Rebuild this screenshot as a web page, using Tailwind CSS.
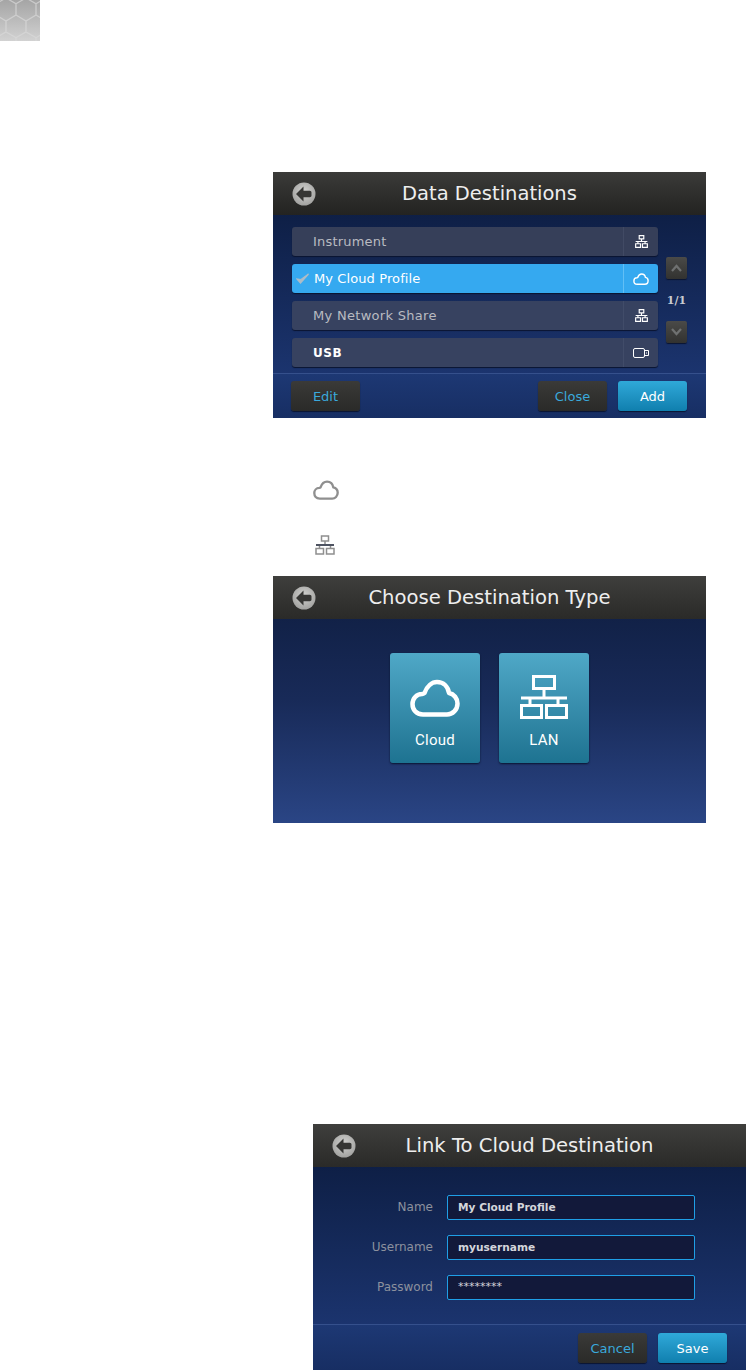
<!DOCTYPE html>
<html lang="en">
<head>
<meta charset="UTF-8">
<title>Data Destinations</title>
<script src="https://cdn.jsdelivr.net/npm/@tailwindcss/browser@4"></script>
</head>
<body class="bg-white font-['DejaVu_Sans',sans-serif]">
<svg width="0" height="0" class="absolute">
  <defs>
    <radialGradient id="backfill" cx="50%" cy="40%" r="60%">
      <stop offset="0" stop-color="#d2d2d0"/>
      <stop offset="1" stop-color="#a2a2a0"/>
    </radialGradient>
    <symbol id="back" viewBox="0 0 24 24">
      <circle cx="12" cy="12" r="11.5" fill="url(#backfill)"/>
      <path d="M11.500 4.500 4 12l7.500 7.500v-4.300h6.300c1 0 1.700-.7 1.700-1.700v-3c0-1-.7-1.700-1.700-1.700h-6.300z" fill="#363634"/>
    </symbol>
    <symbol id="lan" viewBox="0 0 20 20">
      <path d="M6.500 1h7v5h-7zM10 6v4M1 10h18M4.500 10v3M15.500 10v3M1 13.500h7.500V19H1zM11.500 13.500H19V19h-7.500z" fill="none" stroke="currentColor" stroke-width="1.800"/>
    </symbol>
    <symbol id="cloud" viewBox="0 0 50 38">
      <path d="M13 35.500C6 35.500 2.500 30.500 2.500 25 2.500 19.500 6.500 15 12 15 13 14.800 14 14.500 14.500 14 17 7 22 3 27 3 33.500 3 38 7.500 39 14 44 15 47.500 19.500 47.500 24.500 47.500 31 42.500 35.500 37 35.500z" fill="none" stroke="currentColor" stroke-width="4.500" stroke-linejoin="round"/>
    </symbol>
    <pattern id="hex" width="20" height="34" patternUnits="userSpaceOnUse" x="-4" y="-2">
      <path d="M10 0 20 5.800V17L10 23 0 17V5.800zM10 23V34M0 5.800 -2 4.600M20 5.800 22 4.600" fill="none" stroke="#dadada" stroke-width="1.300"/>
    </pattern>
  </defs>
</svg>

<div class="w-[746px] h-[1370px] overflow-hidden">
  <div class="w-10 h-[41px] bg-gradient-to-b from-[#a5a5a5] to-[#d2d2d2]">
    <svg width="40" height="41" class="opacity-70"><rect width="40" height="41" fill="url(#hex)"/></svg>
  </div>

  <!-- Data Destinations -->
  <div class="ml-[273px] mt-[131px] w-[433px] h-[246px] flex flex-col bg-gradient-to-b from-[#0b1a3c] to-[#1f3a7a]">
    <div class="h-[43px] shrink-0 flex items-center relative bg-gradient-to-b from-[#3b3b39] to-[#232321]">
      <svg class="ml-[19px] w-6 h-6"><use href="#back"/></svg>
      <span class="absolute inset-x-0 text-center text-[19.500px] text-[#eeeeee]">Data Destinations</span>
    </div>
    <div class="flex pl-[19px] pt-3 h-[159px] shrink-0 border-b border-[#35508c]">
      <div class="w-[366px] flex flex-col gap-2">
        <div class="h-[29px] flex rounded-[3px] bg-[#363f59] shadow-[0_1px_1px_#0a1430] text-[13px] text-[#b9bbc1]">
          <span class="flex-1 pl-[21px] leading-[29px] tracking-[0.2px]">Instrument</span>
          <span class="w-[35px] flex items-center justify-center border-l border-[#414a64] text-white"><svg class="w-[13px] h-[13px]"><use href="#lan"/></svg></span>
        </div>
        <div class="h-[29px] flex rounded-[3px] bg-[#35a9f0] shadow-[0_1px_1px_#0a1430] text-[13px] text-white">
          <span class="flex-1 flex items-center leading-[28px] tracking-[0.1px]">
            <svg class="ml-[4px] mr-[5px] w-[13px] h-[11px]" viewBox="0 0 13 11"><path d="M1 6l3.500 4L12.500 1 5 6.500z" fill="#aebcc6" stroke="#aebcc6" stroke-width="1.200"/></svg>My Cloud Profile
          </span>
          <span class="w-[35px] flex items-center justify-center border-l border-[#62bff5] text-white"><svg class="w-[16px] h-[12px]"><use href="#cloud"/></svg></span>
        </div>
        <div class="h-[29px] flex rounded-[3px] bg-[#374260] shadow-[0_1px_1px_#0a1430] text-[13px] text-[#b9bbc1]">
          <span class="flex-1 pl-[21px] leading-[29px] tracking-[0.3px]">My Network Share</span>
          <span class="w-[35px] flex items-center justify-center border-l border-[#414c69] text-white"><svg class="w-[13px] h-[13px]"><use href="#lan"/></svg></span>
        </div>
        <div class="h-[29px] flex rounded-[3px] bg-[#374260] shadow-[0_1px_1px_#0a1430] text-[12px] font-bold text-white">
          <span class="flex-1 pl-[21px] leading-[30px] tracking-[0.5px]">USB</span>
          <span class="w-[35px] flex items-center justify-center border-l border-[#414c69] text-white">
            <svg class="w-4 h-[10px]" viewBox="0 0 16 10" fill="none" stroke="currentColor"><rect x="0.500" y="0.500" width="11" height="9" rx="1.500"/><path d="M11.500 2.500h4v5h-4M13 5h1"/></svg>
          </span>
        </div>
      </div>
      <div class="ml-2 w-[21px] flex flex-col items-center pt-[30px]">
        <div class="w-[21px] h-[22px] rounded-[2px] flex items-center justify-center bg-gradient-to-b from-[#4a4a48] to-[#323230] shadow-[0_1px_1px_#0a1430]">
          <svg width="11" height="8" viewBox="0 0 11 8" fill="none" stroke="#6f7171" stroke-width="2.200"><path d="M1 7l4.500-5L10 7"/></svg>
        </div>
        <span class="mt-[15px] text-[11px] leading-[14px] font-bold text-[#c9cbd0] whitespace-nowrap font-['DejaVu_Serif',serif]">1/1</span>
        <div class="mt-[13px] w-[21px] h-[22px] rounded-[2px] flex items-center justify-center bg-gradient-to-b from-[#4a4a48] to-[#323230] shadow-[0_1px_1px_#0a1430]">
          <svg width="11" height="8" viewBox="0 0 11 8" fill="none" stroke="#6f7171" stroke-width="2.200"><path d="M1 1l4.500 5L10 1"/></svg>
        </div>
      </div>
    </div>
    <div class="flex-1 flex items-start pt-[7px] pl-[18px] pr-[19px] text-[13px] bg-gradient-to-b from-[#1d3874] to-[#172e63]">
      <button class="w-[69px] h-[30px] pt-px rounded-[3px] text-[#3aa9dc] bg-gradient-to-b from-[#3a3a38] to-[#2a2a28] shadow-[0_1px_1px_#0a1430]">Edit</button>
      <button class="ml-auto w-[69px] h-[30px] pt-px rounded-[3px] text-[#3aa9dc] bg-gradient-to-b from-[#3a3a38] to-[#2a2a28] shadow-[0_1px_1px_#0a1430]">Close</button>
      <button class="ml-[11px] w-[69px] h-[30px] pt-px rounded-[3px] text-white bg-gradient-to-b from-[#2fa9d9] to-[#0f7fae] shadow-[0_1px_1px_#0a1430]">Add</button>
    </div>
  </div>

  <!-- legend icons -->
  <div class="ml-[313px] mt-[62px] text-[#8f8f8f]">
    <svg class="w-[26px] h-[20px] block"><use href="#cloud"/></svg>
    <svg class="ml-[2px] mt-[35px] w-[20px] h-[20px] block" viewBox="0 0 20 20" fill="none" stroke="#8f8f8f" stroke-width="1.500">
      <path d="M6.500 1h7v5h-7zM10 6v4M4.500 10v3M15.500 10v3M1 13.500h7.500V19H1zM11.500 13.500H19V19h-7.500z"/>
      <path d="M1 10h18" stroke="#4d5361" stroke-width="2"/>
    </svg>
  </div>

  <!-- Choose Destination Type -->
  <div class="ml-[273px] mt-[21px] w-[433px] h-[247px] flex flex-col bg-gradient-to-b from-[#0e1d3f] via-[#182a58] to-[#2a4585]">
    <div class="h-[43px] shrink-0 flex items-center relative bg-gradient-to-b from-[#3f3f3d] to-[#2a2a28]">
      <svg class="ml-[19px] w-6 h-6"><use href="#back"/></svg>
      <span class="absolute inset-x-0 text-center text-[19.600px] text-[#eeeeee]">Choose Destination Type</span>
    </div>
    <div class="flex justify-center gap-[19px] pt-[34px] font-['Roboto',sans-serif] text-[15px] text-white">
      <div class="w-[90px] h-[110px] rounded-[3px] flex flex-col items-center bg-gradient-to-b from-[#4fa8c7] to-[#1d7391] shadow-[0_1px_2px_#0a1430]">
        <svg class="mt-[26px] w-[50px] h-[38px]"><use href="#cloud"/></svg>
        <span class="mt-[13px] leading-[20px] tracking-[0.3px]">Cloud</span>
      </div>
      <div class="w-[90px] h-[110px] rounded-[3px] flex flex-col items-center bg-gradient-to-b from-[#4fa8c7] to-[#1d7391] shadow-[0_1px_2px_#0a1430]">
        <svg class="mt-[22px] w-[48px] h-[44px]" viewBox="0 0 48 44" fill="none" stroke="currentColor" stroke-width="3"><path d="M13.500 1.500h21v12h-21zM24 13.500V23M1 23h46M10 23v7M38 23v7M1.500 30.500h20v12h-20zM26.500 30.500h20v12h-20z"/></svg>
        <span class="mt-[11px] leading-[20px] tracking-[0.3px]">LAN</span>
      </div>
    </div>
  </div>

  <!-- Link To Cloud Destination -->
  <div class="ml-[313px] mt-[301px] w-[433px] h-[246px] flex flex-col bg-gradient-to-b from-[#0b1a3c] to-[#1f3a7a]">
    <div class="h-[43px] shrink-0 flex items-center relative bg-gradient-to-b from-[#3f3f3d] to-[#2a2a28]">
      <svg class="ml-[19px] w-6 h-6"><use href="#back"/></svg>
      <span class="absolute inset-x-0 text-center text-[19.600px] text-[#eeeeee]">Link To Cloud Destination</span>
    </div>
    <div class="h-[158px] shrink-0 pt-[28px] flex flex-col gap-[15px] border-b border-[#35508c] text-[12px]">
      <div class="flex items-center">
        <span class="w-[120px] pb-[2px] text-right text-[#8c919e]">Name</span>
        <div class="ml-[14px] w-[248px] h-[25px] rounded-[2px] border border-[#1f9fe6] bg-[#12193a] pl-[10px] text-[10.600px] font-bold leading-[23px] text-[#d4d5da]">My Cloud Profile</div>
      </div>
      <div class="flex items-center">
        <span class="w-[120px] pb-[2px] text-right text-[#8c919e]">Username</span>
        <div class="ml-[14px] w-[248px] h-[25px] rounded-[2px] border border-[#1f9fe6] bg-[#12193a] pl-[10px] text-[10.600px] font-bold leading-[23px] text-[#d4d5da]">myusername</div>
      </div>
      <div class="flex items-center">
        <span class="w-[120px] pb-[2px] text-right text-[#8c919e]">Password</span>
        <div class="ml-[14px] w-[248px] h-[25px] rounded-[2px] border border-[#1f9fe6] bg-[#12193a] pl-[10px] text-[11px] leading-[22px] text-[#d4d5da]">********</div>
      </div>
    </div>
    <div class="flex-1 flex justify-end gap-[11px] pt-[8px] pr-[19px] text-[13px] bg-gradient-to-b from-[#1d3874] to-[#172e63]">
      <button class="w-[69px] h-[30px] pt-px rounded-[3px] text-[#3aa9dc] bg-gradient-to-b from-[#3a3a38] to-[#2a2a28] shadow-[0_1px_1px_#0a1430]">Cancel</button>
      <button class="w-[69px] h-[30px] pt-px rounded-[3px] text-white bg-gradient-to-b from-[#2fa9d9] to-[#0f7fae] shadow-[0_1px_1px_#0a1430]">Save</button>
    </div>
  </div>
</div>
</body>
</html>
